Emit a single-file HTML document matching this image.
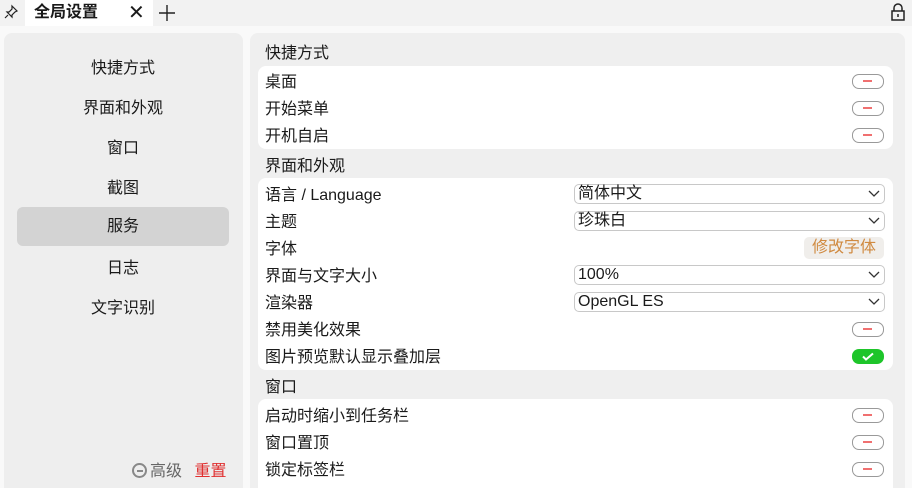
<!DOCTYPE html>
<html><head><meta charset="utf-8"><style>
*{box-sizing:border-box;margin:0;padding:0}
html,body{width:912px;height:488px;overflow:hidden}
body{background:#f9f9f9;font-family:"Liberation Sans","Noto Sans CJK SC",sans-serif;color:#1a1a1a;position:relative}
.top{position:absolute;left:0;top:0;width:912px;height:26px;background:#f2f2f2}
.tab{position:absolute;left:25px;top:0;width:128px;height:26px;background:#fff;font-weight:bold;font-size:16px;line-height:26px;padding-left:9px}
.side{position:absolute;left:4px;top:33px;width:239px;height:455px;background:#eeeeee;border-radius:8px 8px 0 0}
.si{position:absolute;left:13px;width:212px;height:39px;line-height:39px;text-align:center;font-size:16px;border-radius:6px}
.main{position:absolute;left:250px;top:33px;width:655px;height:455px;background:#efefef;border-radius:8px 8px 0 0}
.card{position:absolute;left:8px;width:635px;background:#fff;border-radius:8px}
.h{position:absolute;left:15px;font-size:16px}
.r{position:absolute;left:7px;font-size:16px;line-height:20px;margin-top:2px}
.tg{position:absolute;left:594px;width:32px;height:15px;border:1.5px solid #999;border-radius:7px;background:#fff}
.tg:after{content:"";position:absolute;left:10px;top:4.5px;width:9px;height:2px;background:#f07070}
.dd{position:absolute;left:316px;width:311px;height:20px;border:1px solid #c8c8c8;border-radius:5px;font-size:16px;line-height:18px;padding-left:3px;background:#fff}
.dd svg{position:absolute;right:4px;top:5px}
</style></head><body>
<div class="top">
<svg style="position:absolute;left:3px;top:4px" width="16" height="16" viewBox="0 0 16 16" fill="none" stroke="#222" stroke-width="1.2"><path d="M9 2l5 5-2 1-3 3 0 2-5-5 2 0 3-3z M5 11l-3 3"/></svg>
<div class="tab">全局设置<span style="position:absolute;left:103px;top:0;font-weight:normal;font-size:20px">✕</span></div>
<svg style="position:absolute;left:158px;top:4px" width="18" height="18" viewBox="0 0 18 18" stroke="#222" stroke-width="1.4"><path d="M9 1v16M1 9h16"/></svg>
<svg style="position:absolute;left:890px;top:3px" width="16" height="18" viewBox="0 0 16 18" fill="none" stroke="#222" stroke-width="1.5"><path d="M4 8V5a4 4 0 0 1 8 0v3"/><rect x="2" y="8" width="12" height="9"/><path d="M8 11v3"/></svg>
</div>
<div class="side">
<div class="si" style="top:16px">快捷方式</div>
<div class="si" style="top:56px">界面和外观</div>
<div class="si" style="top:96px">窗口</div>
<div class="si" style="top:136px">截图</div>
<div class="si" style="top:174px;background:#d3d3d3">服务</div>
<div class="si" style="top:216px">日志</div>
<div class="si" style="top:256px">文字识别</div>
<div style="position:absolute;left:128px;top:424px;font-size:16px;color:#666;white-space:nowrap"><span style="display:inline-block;width:15px;height:15px;border:2px solid #888;border-radius:50%;position:relative;top:2px;margin-right:3px"><span style="position:absolute;left:2.5px;top:4.5px;width:6px;height:2px;background:#888"></span></span>高级 <span style="color:#e03030;margin-left:8px">重置</span></div>
</div>
<div class="main">
<div class="h" style="top:6px">快捷方式</div>
<div class="card" style="top:33px;height:83px">
<div class="r" style="top:5px">桌面</div><div class="tg" style="top:8px"></div>
<div class="r" style="top:32px">开始菜单</div><div class="tg" style="top:35px"></div>
<div class="r" style="top:59px">开机自启</div><div class="tg" style="top:62px"></div>
</div>
<div class="h" style="top:119px">界面和外观</div>
<div class="card" style="top:145px;height:192px">
<div class="r" style="top:6px">语言 / Language</div><div class="dd" style="top:6px">简体中文<svg width="12" height="8" viewBox="0 0 12 8" fill="none" stroke="#333" stroke-width="1.3"><path d="M1 1l5 5 5-5"/></svg></div>
<div class="r" style="top:33px">主题</div><div class="dd" style="top:33px">珍珠白<svg width="12" height="8" viewBox="0 0 12 8" fill="none" stroke="#333" stroke-width="1.3"><path d="M1 1l5 5 5-5"/></svg></div>
<div class="r" style="top:60px">字体</div><div style="position:absolute;left:546px;top:59px;width:80px;height:22px;background:#f0eeeb;border-radius:5px;color:#d08a40;font-size:16px;line-height:22px;text-align:center">修改字体</div>
<div class="r" style="top:87px">界面与文字大小</div><div class="dd" style="top:87px">100%<svg width="12" height="8" viewBox="0 0 12 8" fill="none" stroke="#333" stroke-width="1.3"><path d="M1 1l5 5 5-5"/></svg></div>
<div class="r" style="top:114px">渲染器</div><div class="dd" style="top:114px">OpenGL ES<svg width="12" height="8" viewBox="0 0 12 8" fill="none" stroke="#333" stroke-width="1.3"><path d="M1 1l5 5 5-5"/></svg></div>
<div class="r" style="top:141px">禁用美化效果</div><div class="tg" style="top:144px"></div>
<div class="r" style="top:168px">图片预览默认显示叠加层</div>
<div style="position:absolute;left:594px;top:171px;width:32px;height:15px;border-radius:7px;background:#1ec52a"><svg style="position:absolute;left:10px;top:3px" width="12" height="9" viewBox="0 0 12 9" fill="none" stroke="#fff" stroke-width="2"><path d="M1 4.5l3 3 7-6"/></svg></div>
</div>
<div class="h" style="top:340px">窗口</div>
<div class="card" style="top:366px;height:100px">
<div class="r" style="top:6px">启动时缩小到任务栏</div><div class="tg" style="top:9px"></div>
<div class="r" style="top:33px">窗口置顶</div><div class="tg" style="top:36px"></div>
<div class="r" style="top:60px">锁定标签栏</div><div class="tg" style="top:63px"></div>
</div>
</div>
</body></html>
